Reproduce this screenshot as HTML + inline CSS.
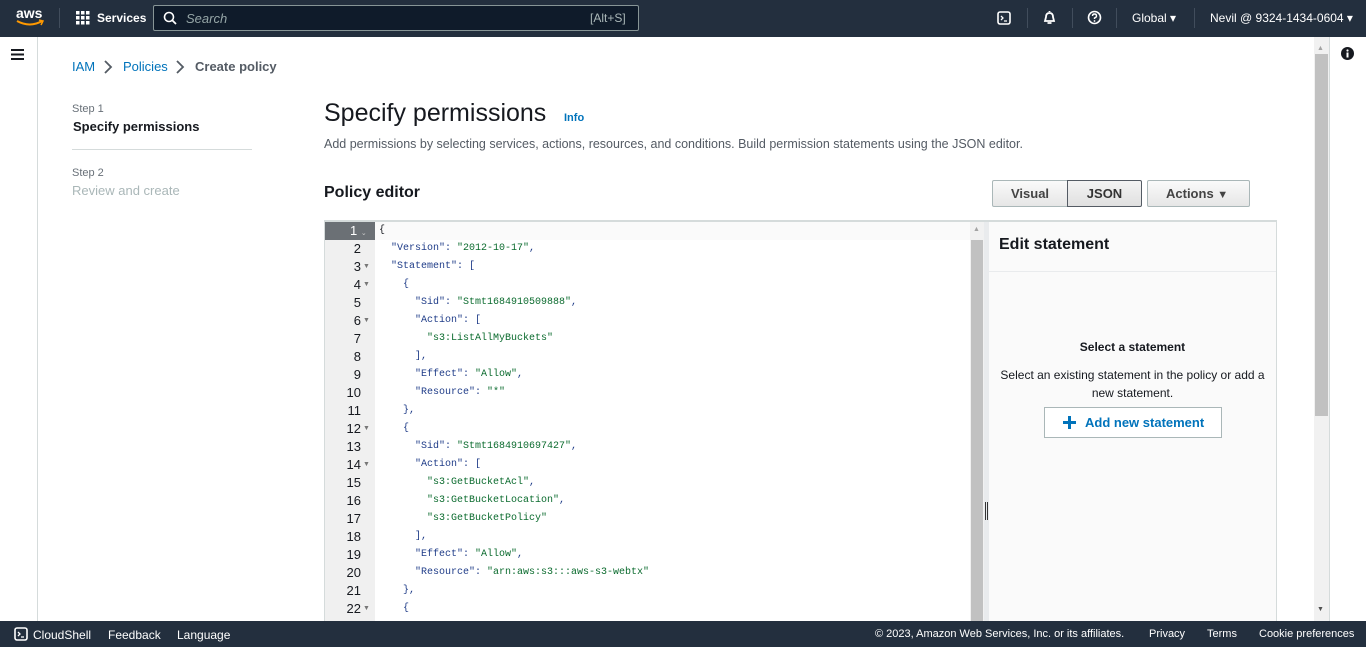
<!DOCTYPE html>
<html><head><meta charset="utf-8">
<style>
*{box-sizing:border-box;margin:0;padding:0}
body{width:1366px;height:647px;overflow:hidden;background:#fff;font-family:"Liberation Sans",Arial,sans-serif;position:relative;color:#16191f}
.a{position:absolute;white-space:nowrap}
.nav{left:0;top:0;width:1366px;height:37px;background:#232f3e}
.foot{left:0;top:621px;width:1366px;height:26px;background:#232f3e;color:#fff;font-size:12px}
.code{font-family:"Liberation Mono",monospace;font-size:10px;color:#1f3c88}
.s{color:#0b6b2e}
.sep{width:1px;height:20px;background:#414d5c;top:8px}
</style></head><body>
<div class="a nav"></div>
<div class="a" style="left:16px;top:5px;color:#fff;font-size:14px;font-weight:bold">aws</div>
<svg class="a" style="left:15px;top:19px" width="30" height="8"><path d="M2 2 Q15 9 27 2" stroke="#ff9900" stroke-width="2" fill="none"/><path d="M24 1 L28 2 L26 6" stroke="#ff9900" stroke-width="1.5" fill="none"/></svg>
<div class="a sep" style="left:59px"></div>
<svg class="a" style="left:76px;top:11px" width="14" height="14" fill="#fff"><rect x="0" y="0" width="3.5" height="3.5"/><rect x="5" y="0" width="3.5" height="3.5"/><rect x="10" y="0" width="3.5" height="3.5"/><rect x="0" y="5" width="3.5" height="3.5"/><rect x="5" y="5" width="3.5" height="3.5"/><rect x="10" y="5" width="3.5" height="3.5"/><rect x="0" y="10" width="3.5" height="3.5"/><rect x="5" y="10" width="3.5" height="3.5"/><rect x="10" y="10" width="3.5" height="3.5"/></svg>
<div class="a" style="left:97px;top:11px;color:#fff;font-size:12px;font-weight:bold">Services</div>
<div class="a" style="left:153px;top:5px;width:486px;height:26px;background:#0f1b2a;border:1px solid #879596;border-radius:2px"></div>
<svg class="a" style="left:163px;top:11px" width="14" height="14"><circle cx="6" cy="6" r="4.5" stroke="#fff" stroke-width="1.6" fill="none"/><path d="M9.5 9.5 L13 13" stroke="#fff" stroke-width="1.8"/></svg>
<div class="a" style="left:186px;top:11px;color:#95a5a6;font-size:13px;font-style:italic">Search</div>
<div class="a" style="left:590px;top:11px;color:#aab7b8;font-size:12px">[Alt+S]</div>
<svg class="a" style="left:997px;top:11px" width="14" height="14"><rect x="1" y="1" width="12" height="12" rx="2" stroke="#fff" stroke-width="1.6" fill="none"/><path d="M4 5 L6 7 L4 9 M7 10 H10" stroke="#fff" stroke-width="1.3" fill="none"/></svg>
<div class="a sep" style="left:1027px"></div>
<svg class="a" style="left:1042px;top:10px" width="15" height="15"><path d="M7.5 1 L7.5 2 M3 11 L4 7 Q4 3 7.5 3 Q11 3 11 7 L12 11 Z M5.5 13 H9.5" stroke="#fff" stroke-width="1.8" fill="none"/></svg>
<div class="a sep" style="left:1072px"></div>
<svg class="a" style="left:1087px;top:10px" width="15" height="15"><circle cx="7.5" cy="7.5" r="6" stroke="#fff" stroke-width="1.6" fill="none"/><path d="M5.5 6 Q5.5 4 7.5 4 Q9.5 4 9.5 6 Q9.5 7.3 7.5 8 V9" stroke="#fff" stroke-width="1.4" fill="none"/><circle cx="7.5" cy="11" r="0.9" fill="#fff"/></svg>
<div class="a sep" style="left:1116px"></div>
<div class="a" style="left:1132px;top:11px;color:#fff;font-size:12px">Global ▾</div>
<div class="a sep" style="left:1194px"></div>
<div class="a" style="left:1210px;top:11px;color:#fff;font-size:12px">Nevil @ 9324-1434-0604 ▾</div>

<div class="a" style="left:37px;top:37px;width:1px;height:584px;background:#d5dbdb"></div>
<svg class="a" style="left:11px;top:49px" width="13" height="11"><path d="M0 1H13M0 5.5H13M0 10H13" stroke="#16191f" stroke-width="2"/></svg>
<div class="a" style="left:1329px;top:37px;width:1px;height:584px;background:#d5dbdb"></div>
<svg class="a" style="left:1341px;top:47px" width="13" height="13"><circle cx="6.5" cy="6.5" r="6.5" fill="#16191f"/><rect x="5.5" y="5.5" width="2" height="5" fill="#fff"/><circle cx="6.5" cy="3.5" r="1.1" fill="#fff"/></svg>
<div class="a" style="left:1314px;top:37px;width:15px;height:584px;background:#f1f1f1"></div>
<div class="a" style="left:1315px;top:54px;width:13px;height:362px;background:#c1c1c1"></div>
<div class="a" style="left:1317px;top:45px;font-size:7px;color:#a3a3a3">▲</div>
<div class="a" style="left:1317px;top:606px;font-size:7px;color:#505050">▼</div>

<div class="a" style="left:72px;top:59px;font-size:13px;color:#0073bb">IAM</div>
<svg class="a" style="left:103px;top:60px" width="10" height="14"><path d="M2 1 L8 7 L2 13" stroke="#545b64" stroke-width="1.8" fill="none"/></svg>
<div class="a" style="left:123px;top:59px;font-size:13px;color:#0073bb">Policies</div>
<svg class="a" style="left:175px;top:60px" width="10" height="14"><path d="M2 1 L8 7 L2 13" stroke="#545b64" stroke-width="1.8" fill="none"/></svg>
<div class="a" style="left:195px;top:59px;font-size:13px;color:#545b64;font-weight:bold">Create policy</div>

<div class="a" style="left:72px;top:103px;font-size:11px;color:#687078">Step 1</div>
<div class="a" style="left:73px;top:119px;font-size:13px;font-weight:bold">Specify permissions</div>
<div class="a" style="left:72px;top:149px;width:180px;height:1px;background:#d5dbdb"></div>
<div class="a" style="left:72px;top:167px;font-size:11px;color:#687078">Step 2</div>
<div class="a" style="left:72px;top:183px;font-size:13px;color:#aab7b8">Review and create</div>

<div class="a" style="left:324px;top:99px;font-size:25px">Specify permissions</div>
<div class="a" style="left:564px;top:112px;font-size:11px;font-weight:bold;color:#0073bb">Info</div>
<div class="a" style="left:324px;top:137px;font-size:12.5px;color:#545b64">Add permissions by selecting services, actions, resources, and conditions. Build permission statements using the JSON editor.</div>
<div class="a" style="left:324px;top:184px;font-size:16px;font-weight:bold">Policy editor</div>

<div class="a" style="left:992px;top:180px;width:76px;height:27px;border:1px solid #aab7b8;border-radius:2px 0 0 2px;background:linear-gradient(#fafafa,#e6e6e6);font-size:13px;font-weight:bold;color:#444;text-align:center;line-height:25px">Visual</div>
<div class="a" style="left:1067px;top:180px;width:75px;height:27px;border:1px solid #545b64;border-radius:0 2px 2px 0;background:linear-gradient(#f3f3f3,#e0e0e0);font-size:13px;font-weight:bold;color:#333;text-align:center;line-height:25px">JSON</div>
<div class="a" style="left:1147px;top:180px;width:103px;height:27px;border:1px solid #aab7b8;border-radius:2px;background:linear-gradient(#fafafa,#e6e6e6);font-size:13px;font-weight:bold;color:#444;line-height:25px;padding-left:18px">Actions <span style="font-size:11px">▼</span></div>

<div class="a" style="left:324px;top:220px;width:953px;height:401px;border:1px solid #d5dbdb;border-top:2px solid #d5dbdb;border-bottom:none"></div>
<div class="a" style="left:325px;top:222px;width:50px;height:399px;background:#f0f0f0"></div>
<div class="a" style="left:325px;top:222px;width:50px;height:18px;background:#6b7075"></div>
<div class="a" style="left:375px;top:222px;width:595px;height:18px;background:#fafafa"></div>
<div class="a" style="left:970px;top:222px;width:14px;height:399px;background:#f1f1f1"></div>
<div class="a" style="left:971px;top:240px;width:12px;height:381px;background:#c1c1c1"></div>
<div class="a" style="left:973px;top:226px;font-size:7px;color:#a3a3a3">▲</div>
<div class="a" style="left:984px;top:222px;width:5px;height:399px;background:#e9ebed"></div>
<div class="a" style="left:985px;top:502px;width:3px;height:18px;border-left:1px solid #333;border-right:1px solid #333"></div>
<div class="a" style="left:989px;top:222px;width:287px;height:399px;background:#fafafa"></div>
<div class="a" style="left:989px;top:271px;width:287px;height:1px;background:#e9ebed"></div>
<div class="a" style="left:999px;top:236px;font-size:16px;font-weight:bold">Edit statement</div>
<div class="a" style="left:989px;top:340px;width:287px;text-align:center;font-size:12px;font-weight:bold;color:#16191f">Select a statement</div>
<div class="a" style="left:989px;top:366px;width:287px;text-align:center;font-size:12px;color:#16191f;white-space:normal;line-height:18px;padding:0 8px">Select an existing statement in the policy or add a new statement.</div>
<div class="a" style="left:1044px;top:407px;width:178px;height:31px;border:1px solid #aab7b8;background:#fff;font-size:13px;font-weight:bold;color:#0073bb;line-height:29px;padding-left:40px">Add new statement</div>
<svg class="a" style="left:1063px;top:416px" width="13" height="13"><path d="M6.5 0V13M0 6.5H13" stroke="#0073bb" stroke-width="3"/></svg>

<div class="a" style="left:325px;top:222px;width:50px;line-height:18px;font-size:13px;color:#fff;padding-left:25px">1 <span style="font-size:7px;color:#ccc">⌄</span></div>
<div class="a code" style="left:379px;top:222px;line-height:18px;white-space:pre"><span style="color:#16191f">{</span>
  "Version": <span class="s">"2012-10-17"</span>,
  "Statement": [
    {
      "Sid": <span class="s">"Stmt1684910509888"</span>,
      "Action": [
        <span class="s">"s3:ListAllMyBuckets"</span>
      ],
      "Effect": <span class="s">"Allow"</span>,
      "Resource": <span class="s">"*"</span>
    },
    {
      "Sid": <span class="s">"Stmt1684910697427"</span>,
      "Action": [
        <span class="s">"s3:GetBucketAcl"</span>,
        <span class="s">"s3:GetBucketLocation"</span>,
        <span class="s">"s3:GetBucketPolicy"</span>
      ],
      "Effect": <span class="s">"Allow"</span>,
      "Resource": <span class="s">"arn:aws:s3:::aws-s3-webtx"</span>
    },
    {</div>
<div class="a" style="left:325px;top:240px;width:36px;text-align:right;font-size:13px;line-height:18px;color:#16191f;white-space:pre">2
3
4
5
6
7
8
9
10
11
12
13
14
15
16
17
18
19
20
21
22</div>
<div class="a" style="left:363px;top:240px;font-size:7px;line-height:18px;color:#777;white-space:pre"> 
▼
▼
 
▼
 
 
 
 
 
▼
 
▼
 
 
 
 
 
 
 
▼</div>

<div class="a foot"></div>
<svg class="a" style="left:14px;top:627px" width="14" height="14"><rect x="1" y="1" width="12" height="12" rx="2" stroke="#fff" stroke-width="1.6" fill="none"/><path d="M4 5 L6 7 L4 9 M7 10 H10" stroke="#fff" stroke-width="1.3" fill="none"/></svg>
<div class="a" style="left:33px;top:628px;color:#fff;font-size:12px">CloudShell</div>
<div class="a" style="left:108px;top:628px;color:#fff;font-size:12px">Feedback</div>
<div class="a" style="left:177px;top:628px;color:#fff;font-size:12px">Language</div>
<div class="a" style="left:875px;top:628px;color:#fff;font-size:11px">© 2023, Amazon Web Services, Inc. or its affiliates.</div>
<div class="a" style="left:1149px;top:628px;color:#fff;font-size:11px">Privacy</div>
<div class="a" style="left:1207px;top:628px;color:#fff;font-size:11px">Terms</div>
<div class="a" style="left:1259px;top:628px;color:#fff;font-size:11px">Cookie preferences</div>
</body></html>
